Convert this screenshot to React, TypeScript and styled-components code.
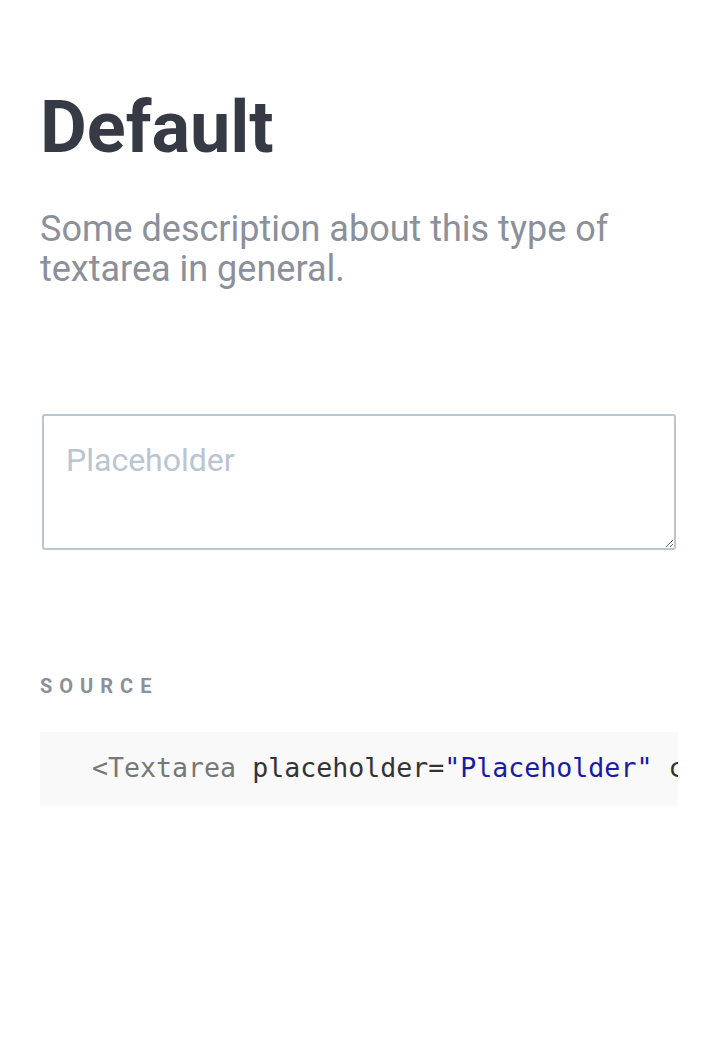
import React from 'react'
import styled, { createGlobalStyle } from 'styled-components'

const GlobalStyle = createGlobalStyle`
  html, body {
    margin: 0;
    padding: 0;
    background: #ffffff;
  }
  body {
    font-family: Roboto, 'Liberation Sans', sans-serif;
  }
`

const Page = styled.div`
  padding: 85px 40px 40px 40px;
`

const Title = styled.h1`
  margin: 0;
  font-size: 72px;
  line-height: 86px;
  font-weight: 700;
  color: #353a45;
`

const Description = styled.p`
  margin: 38px 0 0 0;
  font-size: 36px;
  line-height: 40px;
  color: #8b909a;
`

const Example = styled.div`
  margin-top: 125px;
  padding: 0 2px;
`

const Textarea = styled.textarea`
  display: block;
  box-sizing: border-box;
  width: 100%;
  height: 136px;
  margin: 0;
  padding: 20px 20px 20px 22px;
  border: 2px solid #bac6d2;
  border-radius: 3px;
  font-family: Roboto, 'Liberation Sans', sans-serif;
  font-size: 32px;
  line-height: 1.5;
  color: #353a45;
  background: #ffffff;
  outline: none;

  &::placeholder {
    color: #b9c5d1;
  }
`

const SectionLabel = styled.div`
  margin-top: 124px;
  font-size: 20px;
  line-height: 24px;
  font-weight: 700;
  letter-spacing: 7px;
  text-transform: uppercase;
  color: #8b909a;
`

const CodeBlock = styled.pre`
  margin: 34px 0 0 0;
  padding: 16px 52px 18px 52px;
  background: #f9f9f9;
  overflow: hidden;
  white-space: pre;
  font-family: 'DejaVu Sans Mono', 'Liberation Mono', monospace;
  font-size: 26.6px;
  line-height: 1.5;
  color: #333333;
`

const Token = styled.span<{ kind: 'tag' | 'attr' | 'string' }>`
  color: ${({ kind }) => (kind === 'tag' ? '#777777' : kind === 'string' ? '#1a1aa6' : '#333333')};
`

export default function App() {
  return (
    <>
      <GlobalStyle />
      <Page>
        <Title>Default</Title>
        <Description>Some description about this type of textarea in general.</Description>
        <Example>
          <Textarea placeholder="Placeholder" />
        </Example>
        <SectionLabel>Source</SectionLabel>
        <CodeBlock>
          <Token kind="tag">&lt;Textarea</Token> <Token kind="attr">placeholder=</Token>
          <Token kind="string">"Placeholder"</Token> <Token kind="attr">cols=</Token>
          <Token kind="string">{'{5}'}</Token> <Token kind="tag">/&gt;</Token>
        </CodeBlock>
      </Page>
    </>
  )
}
